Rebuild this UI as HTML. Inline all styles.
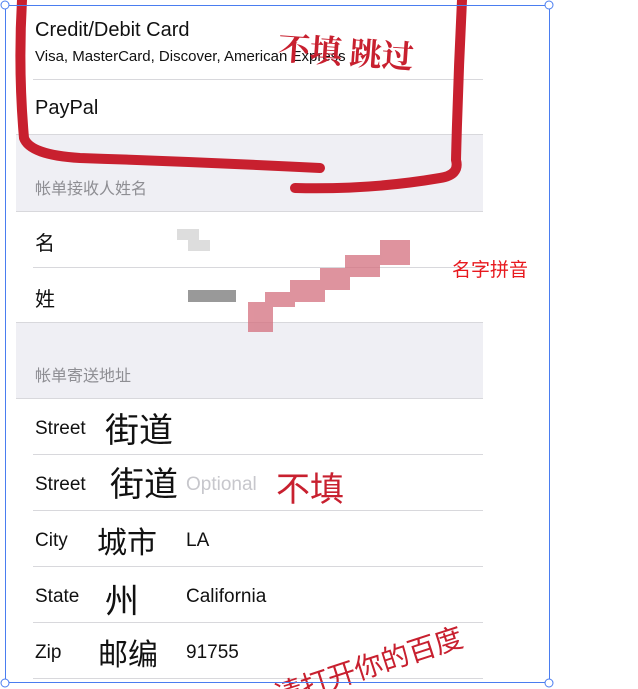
<!DOCTYPE html>
<html><head><meta charset="utf-8"><style>
html,body{margin:0;padding:0;background:#fff;width:638px;height:689px;overflow:hidden;position:relative;font-family:"Liberation Sans","Noto Sans CJK SC",sans-serif;}
.a{position:absolute;}
.g{background:#efeff4;}
.sep{position:absolute;height:1px;background:#d8d8dc;}
.t{position:absolute;color:#111;white-space:nowrap;}
.h{position:absolute;color:#8e8e93;font-size:16px;}
</style></head><body>
<div class="a g" style="left:16px;top:134px;width:467px;height:77px"></div>
<div class="a g" style="left:16px;top:322px;width:467px;height:76px"></div>
<div class="sep" style="left:33px;top:79px;width:450px"></div>
<div class="sep" style="left:16px;top:134px;width:467px"></div>
<div class="sep" style="left:16px;top:211px;width:467px"></div>
<div class="sep" style="left:33px;top:267px;width:450px"></div>
<div class="sep" style="left:16px;top:322px;width:467px"></div>
<div class="sep" style="left:16px;top:398px;width:467px"></div>
<div class="sep" style="left:33px;top:454px;width:450px"></div>
<div class="sep" style="left:33px;top:510px;width:450px"></div>
<div class="sep" style="left:33px;top:566px;width:450px"></div>
<div class="sep" style="left:33px;top:622px;width:450px"></div>
<div class="sep" style="left:33px;top:678px;width:450px"></div>

<div class="t" style="left:35px;top:19px;font-size:20px">Credit/Debit Card</div>
<div class="t" style="left:35px;top:48px;font-size:15px">Visa, MasterCard, Discover, American Express</div>
<div class="t" style="left:35px;top:97px;font-size:20px">PayPal</div>
<div class="h" style="left:35px;top:175px">帐单接收人姓名</div>
<div class="t" style="left:35px;top:227px;font-size:20px">名</div>
<div class="t" style="left:35px;top:283px;font-size:20px">姓</div>
<div class="h" style="left:35px;top:362px">帐单寄送地址</div>
<div class="t" style="left:35px;top:418px;font-size:19px">Street</div>
<div class="t" style="left:105px;top:403px;font-size:34px">街道</div>
<div class="t" style="left:35px;top:474px;font-size:19px">Street</div>
<div class="t" style="left:110px;top:457px;font-size:34px">街道</div>
<div class="t" style="left:186px;top:474px;font-size:19px;color:#c7c7cc">Optional</div>
<div class="t" style="left:276px;top:462px;font-size:34px;color:#c8202f">不填</div>
<div class="t" style="left:35px;top:530px;font-size:19px">City</div>
<div class="t" style="left:97px;top:518px;font-size:30px">城市</div>
<div class="t" style="left:186px;top:530px;font-size:19px">LA</div>
<div class="t" style="left:35px;top:586px;font-size:19px">State</div>
<div class="t" style="left:105px;top:574px;font-size:34px">州</div>
<div class="t" style="left:186px;top:586px;font-size:19px">California</div>
<div class="t" style="left:35px;top:642px;font-size:19px">Zip</div>
<div class="t" style="left:98px;top:630px;font-size:30px">邮编</div>
<div class="t" style="left:186px;top:642px;font-size:19px">91755</div>
<div class="t" style="left:452px;top:255px;font-size:19px;color:#e8191e">名字拼音</div>

<svg class="a" style="left:0;top:0" width="638" height="689">
<g fill="#ddd"><rect x="177" y="229" width="22" height="11"/><rect x="188" y="240" width="22" height="11"/></g>
<g fill="#999"><rect x="188" y="290" width="48" height="12"/></g>
<g fill="#d46f7e" opacity="0.75">
<rect x="380" y="240" width="30" height="25"/><rect x="345" y="255" width="35" height="22"/><rect x="320" y="268" width="30" height="22"/><rect x="290" y="280" width="35" height="22"/><rect x="265" y="292" width="30" height="15"/><rect x="248" y="302" width="25" height="30"/></g>
<g fill="none" stroke="#c8202f" stroke-linecap="round" stroke-linejoin="round">
<path d="M22 0 Q18 70 24 138 Q30 155 80 158 Q200 162 320 168" stroke-width="10"/>
<path d="M462 0 Q458 80 456 160 Q460 175 440 178 Q370 190 295 188" stroke-width="10"/>
</g>
<text x="278" y="64" font-size="32" font-weight="bold" fill="#c8202f" font-family="Noto Serif CJK SC,serif" transform="rotate(4 350 50)">不填 跳过</text>
<text x="265" y="678" font-size="28" fill="#c8202f" font-family="Noto Sans CJK SC,sans-serif" transform="rotate(-18 360 650)">请打开你的百度</text>
<rect x="5.5" y="5.5" width="544" height="677" fill="none" stroke="#4a7df0" stroke-width="1"/>
<g fill="#fff" stroke="#4a7df0"><circle cx="5" cy="5" r="4"/><circle cx="549" cy="5" r="4"/><circle cx="5" cy="683" r="4"/><circle cx="549" cy="683" r="4"/></g>
</svg>
</body></html>
